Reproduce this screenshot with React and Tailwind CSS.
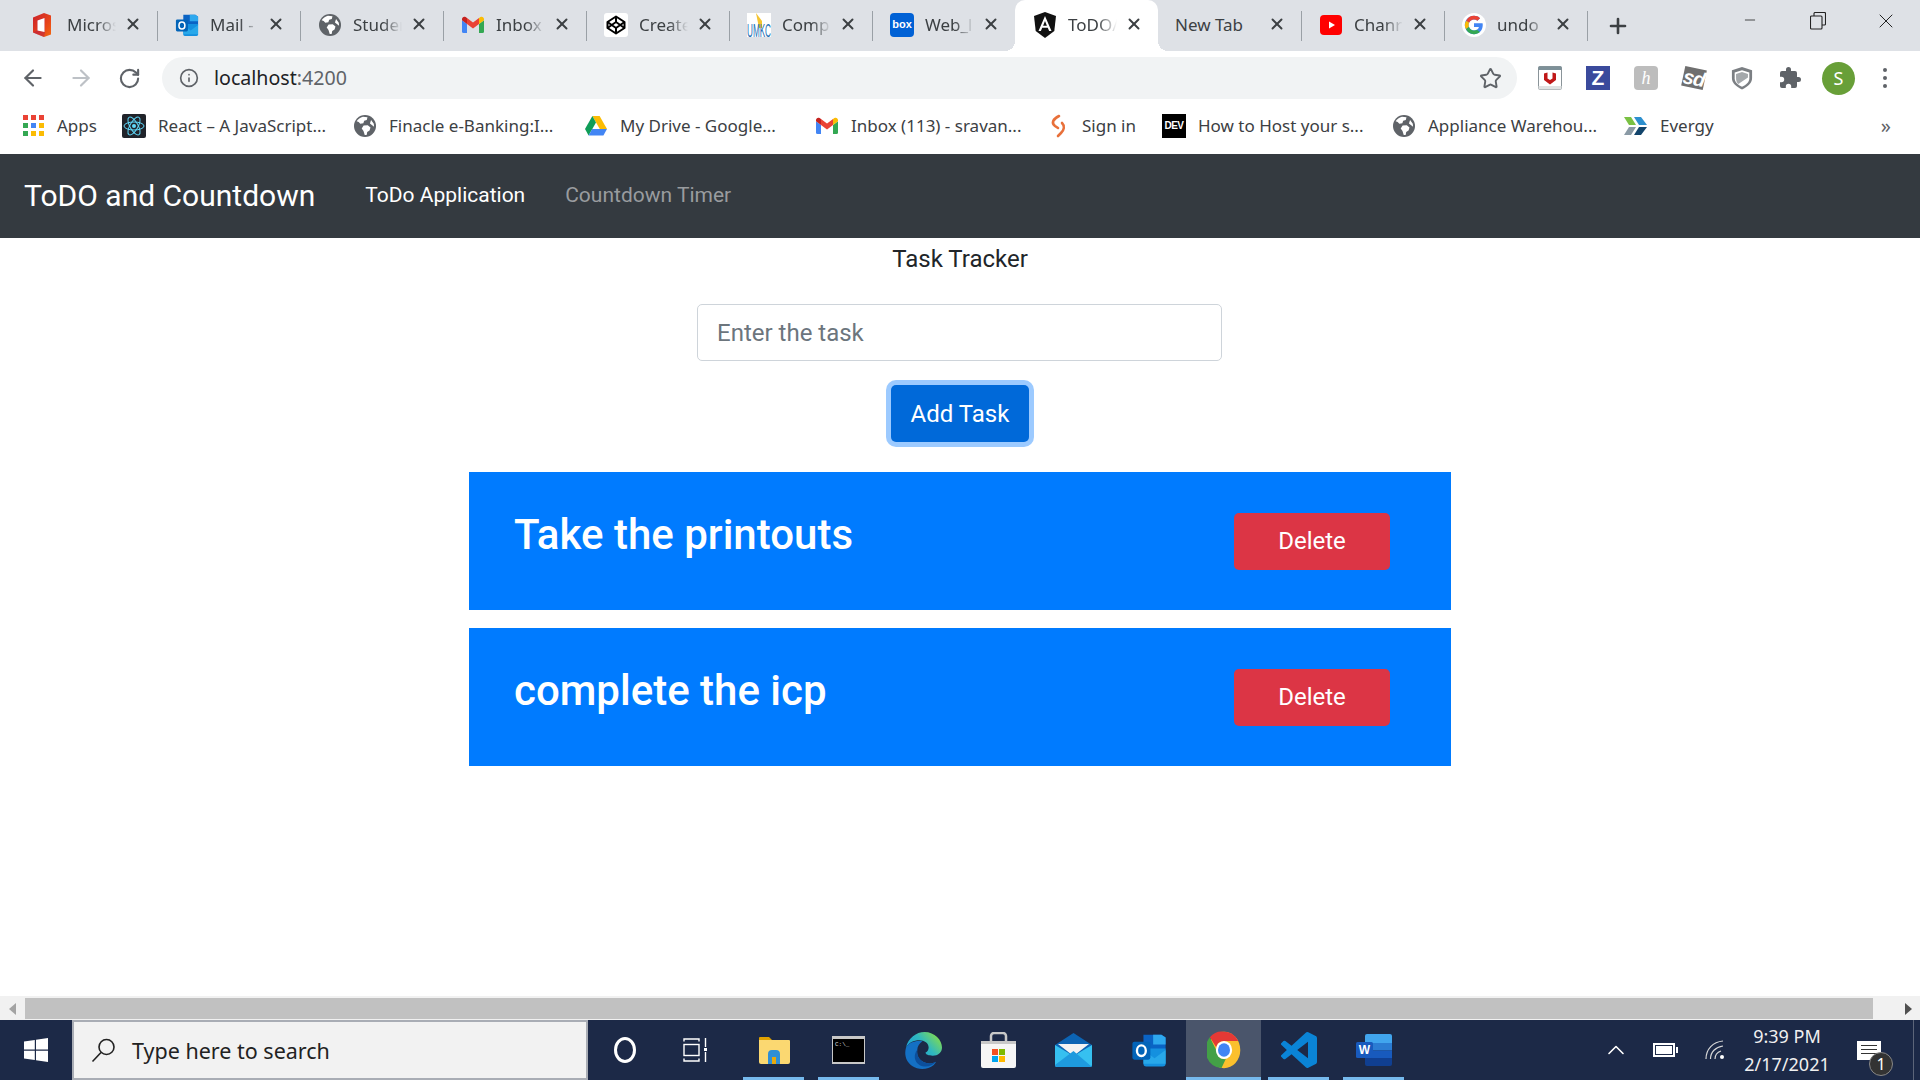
import { ArrowLeft, ArrowRight, RotateCw, Info, Star, X, Plus, Minus, ChevronUp } from 'lucide-react';

const Globe = ({ size = 22 }) => (
  <svg width={size} height={size} viewBox="0 0 16 16">
    <circle cx="8" cy="8" r="8" fill="#5f6368" />
    <path d="M6.500 1.200 9.800 1.600 9.300 3.600 7.400 4.200 6.800 6 4.600 6.400 3.400 5 1.900 4.600A7 7 0 0 1 6.500 1.200Z" fill="#fff" />
    <path d="M7 7.600 10 7.400 12 9 11.300 11.200 9.600 12.400 9.200 14.600 7.800 14.600 6.900 11.600 5.600 9.800Z" fill="#fff" />
    <path d="M12.400 3.600 14.400 6.400 14.600 8.600 13 7.200 11.600 6.200Z" fill="#fff" />
  </svg>
);

const Office = () => (
  <svg width="20" height="26" viewBox="0 0 20 26" className="ml-[-4px]">
    <defs>
      <linearGradient id="officeGrad" x1="0" y1="0" x2="1" y2="1">
        <stop offset="0" stopColor="#c8202c" />
        <stop offset=".6" stopColor="#e8441a" />
        <stop offset="1" stopColor="#f26a10" />
      </linearGradient>
    </defs>
    <path d="M1 5.500 12 1l7 2.500v19L12 25 1 20.500Z" fill="url(#officeGrad)" />
    <path d="M1 20.500 5 18.500V8l8-2.500V20.500L12 25Z" fill="#b01a50" opacity=".45" />
    <path d="M5.500 8.500 12.500 6V20L5.500 18.500Z" fill="#fff" />
  </svg>
);

const Outlook = ({ size = 26 }) => (
  <svg width={size} height={size} viewBox="0 0 26 26">
    <path d="M9 2h13l3 2v9H9Z" fill="#0a63c4" />
    <path d="M16 2h6l3 2v5h-9Z" fill="#2ea8ee" />
    <path d="M9 12h16v11a2 2 0 0 1-2 2H11a2 2 0 0 1-2-2Z" fill="#1490df" />
    <path d="M9 13l8 6 8-6v10H9Z" fill="#28a8ea" />
    <rect x="1" y="7" width="13" height="13" rx="1.500" fill="#0364b8" />
    <ellipse cx="7.500" cy="13.500" rx="3.200" ry="3.800" fill="none" stroke="#fff" strokeWidth="1.700" />
  </svg>
);

const Gmail = () => (
  <svg width="22" height="18" viewBox="0 0 22 18">
    <path d="M1.500 17H5V8l-5-3.800V15.500A1.500 1.500 0 0 0 1.500 17Z" fill="#4285f4" />
    <path d="M17 17h3.500a1.500 1.500 0 0 0 1.500-1.500V4.200L17 8Z" fill="#34a853" />
    <path d="M17 2v6l5-3.800V3c0-2-2.200-3-3.600-1.900Z" fill="#fbbc04" />
    <path d="M5 8V2l6 4.500L17 2v6l-6 4.500Z" fill="#ea4335" />
    <path d="M0 3v1.200L5 8V2L3.600 1.100C2.200 0 0 1 0 3Z" fill="#c5221f" />
  </svg>
);

const Codepen = () => (
  <span className="flex h-[24px] w-[24px] items-center justify-center rounded-[3px] bg-white">
    <svg width="20" height="20" viewBox="0 0 20 20" fill="none" stroke="#000" strokeWidth="2" strokeLinejoin="round">
      <path d="M10 1.500 18.500 7v6L10 18.500 1.500 13V7Z" />
      <path d="M10 1.500V7M10 13v5.500M1.500 7 10 13l8.500-6M1.500 13 10 7l8.500 6" />
    </svg>
  </span>
);

const Umkc = () => (
  <svg width="24" height="24" viewBox="0 0 24 24">
    <rect width="24" height="24" fill="#fff" />
    <path d="M9 0 15 8 15 15 12 15Z" fill="#f4c430" />
    <text x="0" y="24" fontSize="19" fontFamily="Liberation Sans, sans-serif" textLength="24" lengthAdjust="spacingAndGlyphs" fill="#1f6fb5">UMKC</text>
  </svg>
);

const BoxLogo = () => (
  <span className="flex h-[24px] w-[24px] items-center justify-center rounded-[4px] bg-[#0061d5] font-['Liberation_Sans',sans-serif] text-[11px] font-bold text-white">box</span>
);

const Angular = () => (
  <svg width="24" height="26" viewBox="0 0 24 26">
    <path d="M12 0 1 4l1.700 15L12 26l9.300-7L23 4Z" fill="#111" />
    <path d="M12 4 5.500 19h2.400l1.300-3.300h5.600l1.300 3.300h2.400Zm-1.900 9.700L12 9l1.900 4.700Z" fill="#fff" />
  </svg>
);

const YouTube = () => (
  <svg width="22" height="20" viewBox="0 0 22 20">
    <rect width="22" height="20" rx="4" fill="#f00" />
    <path d="M9 6.500 15 10l-6 3.500Z" fill="#fff" />
  </svg>
);

const GoogleG = () => (
  <span className="flex h-[24px] w-[24px] items-center justify-center rounded-full bg-white">
    <svg width="20" height="20" viewBox="0 0 48 48">
      <path d="M44.500 20H24v8.500h11.800C34.700 33.900 30.100 37 24 37c-7.200 0-13-5.800-13-13s5.800-13 13-13c3.100 0 5.900 1.100 8.100 2.900l6.400-6.400C34.600 4.100 29.600 2 24 2 11.800 2 2 11.800 2 24s9.800 22 22 22c11 0 21-8 21-22 0-1.300-.2-2.700-.5-4Z" fill="#4285f4" />
      <path d="M5.300 13.700 12.300 18.800C14.200 14.200 18.700 11 24 11c3.100 0 5.900 1.100 8.100 2.900l6.400-6.400C34.600 4.100 29.600 2 24 2 15.600 2 8.400 6.700 5.300 13.700Z" fill="#ea4335" />
      <path d="M24 46c5.400 0 10.300-1.800 14.100-5l-6.800-5.600C29.300 36.500 26.800 37 24 37c-5.700 0-10.600-3.700-12.300-8.900l-7 5.400C8 40.800 15.400 46 24 46Z" fill="#34a853" />
      <path d="M5.300 13.700C3.200 17 2 20.400 2 24s1 7 2.700 9.500l7-5.400c-.4-1.300-.7-2.700-.7-4.100s.5-3.800 1.300-5.200Z" fill="#fbbc05" />
    </svg>
  </span>
);

const AppsGrid = () => (
  <span className="grid w-[21px] grid-cols-3 gap-[3px]">
    {['bg-[#ea4335]', 'bg-[#ea4335]', 'bg-[#ea4335]', 'bg-[#34a853]', 'bg-[#4285f4]', 'bg-[#fbbc04]', 'bg-[#34a853]', 'bg-[#fbbc04]', 'bg-[#fbbc04]'].map((c, i) => (
      <span key={i} className={`h-[5px] w-[5px] ${c}`} />
    ))}
  </span>
);

const ReactLogo = () => (
  <svg width="24" height="24" viewBox="0 0 24 24">
    <rect width="24" height="24" rx="2" fill="#20232a" />
    <g fill="none" stroke="#61dafb" strokeWidth="1">
      <ellipse cx="12" cy="12" rx="10" ry="4" />
      <ellipse cx="12" cy="12" rx="10" ry="4" transform="rotate(60 12 12)" />
      <ellipse cx="12" cy="12" rx="10" ry="4" transform="rotate(120 12 12)" />
    </g>
    <circle cx="12" cy="12" r="2" fill="#61dafb" />
  </svg>
);

const Drive = () => (
  <svg width="22" height="20" viewBox="0 0 22 20">
    <path d="M7.400 0h7.200L22 13h-7.200Z" fill="#fbbc04" />
    <path d="M7.400 0 0 13l3.600 6.500L11 6.500Z" fill="#0f9d58" />
    <path d="M3.600 19.500h14.800L22 13H7.200Z" fill="#4285f4" />
  </svg>
);

const SignIn = () => (
  <svg width="18" height="24" viewBox="0 0 18 24" fill="none" stroke="#e8703a" strokeWidth="2.600" strokeLinecap="round">
    <path d="M10 2C4 5 2 9 6 12l3 2" />
    <path d="M13 9c3 3 2 7-1 10l-3 3" />
  </svg>
);

const Dev = () => (
  <span className="flex h-[24px] w-[24px] items-center justify-center bg-black font-['Liberation_Sans',sans-serif] text-[10px] font-bold tracking-[-0.5px] text-white">DEV</span>
);

const Evergy = () => (
  <svg width="24" height="20" viewBox="0 0 24 20">
    <path d="M0 1h7l5 8H5Z" fill="#7ac143" />
    <path d="M5 11h7l-5 8H0Z" fill="#8a9aa5" />
    <path d="M10 1h7l6 8h-8Z" fill="#2d8fce" />
    <path d="M15 11h8l-6 8h-7Z" fill="#12446b" />
  </svg>
);

const McAfee = () => (
  <svg width="24" height="24" viewBox="0 0 24 24">
    <rect x=".5" y=".5" width="23" height="23" rx="1.500" fill="#fff" stroke="#8a9499" />
    <rect x=".5" y=".5" width="23" height="3.500" fill="#7d9098" />
    <rect x=".5" y="20" width="23" height="3.500" fill="#dfe2e2" />
    <path d="M6 7.500 9.500 6.500V12.500L12 14l2.500-1.500V6.500L18 7.500V14l-6 4.500L6 14Z" fill="#c01818" />
  </svg>
);

const Zotero = () => (
  <span className="flex h-[24px] w-[24px] items-center justify-center bg-[#3a4a9c] font-['Liberation_Sans',sans-serif] text-[21px] font-bold text-white">Z</span>
);

const Honey = () => (
  <span className="flex h-[24px] w-[24px] items-center justify-center rounded-[4px] bg-[#bdbdbd] font-['Liberation_Serif',serif] text-[18px] italic text-white">h</span>
);

const SdLogo = () => (
  <span className="flex h-[20px] w-[22px] rotate-12 items-center justify-center bg-[#6f6f6f] font-['Liberation_Sans',sans-serif] text-[20px] font-bold italic leading-none tracking-[-1px] text-white">sd</span>
);

const ShieldExt = () => (
  <svg width="22" height="24" viewBox="0 0 24 26">
    <path d="M12 1 23 4.500V13c0 6-5 9.500-11 12.500C6 22.500 1 19 1 13V4.500Z" fill="#7b7f83" />
    <path d="M12 4.500 20 7v6.500c0 4-3.500 7-8 9-4.500-2-8-5-8-9V7Z" fill="#fff" />
    <path d="M12 6.500 18.500 8.500v4L8 19.500C6 18 5.500 15 5.500 13V8.500Z" fill="#a4a8ab" />
  </svg>
);

const Puzzle = () => (
  <svg width="24" height="24" viewBox="0 0 24 24" fill="#5f6368">
    <path d="M20.500 11H19V7a2 2 0 0 0-2-2h-4V3.500a2.500 2.500 0 0 0-5 0V5H4a2 2 0 0 0-2 2v3.800h1.500a2.700 2.700 0 0 1 0 5.400H2V20a2 2 0 0 0 2 2h3.800v-1.500a2.700 2.700 0 0 1 5.400 0V22H17a2 2 0 0 0 2-2v-4h1.500a2.500 2.500 0 0 0 0-5Z" />
  </svg>
);

const WinLogo = () => (
  <svg width="24" height="24" viewBox="0 0 24 24" fill="#fff">
    <path d="M0 3.400 10.800 2v9.500H0ZM12 1.800 24 0v11.500H12ZM0 12.700h10.800v9.400L0 20.600ZM12 12.700h12V24l-12-1.700Z" />
  </svg>
);

const SearchGlass = () => (
  <svg width="26" height="26" viewBox="0 0 26 26" fill="none" stroke="#222" strokeWidth="1.600">
    <circle cx="15.500" cy="10" r="7.500" />
    <path d="M10 15.500 1.500 24.500" />
  </svg>
);

const TaskView = () => (
  <svg width="26" height="26" viewBox="0 0 26 26" fill="none" stroke="#fff" strokeWidth="1.400" className="ml-[-5px]">
    <path d="M1 4.500V2h15v2.500M1 21.500V24h15v-2.500" />
    <rect x="1" y="7.500" width="15" height="11" />
    <path d="M22.500 1v9M22.500 15v10" />
    <rect x="21" y="11" width="3" height="3" fill="#fff" stroke="none" />
  </svg>
);

const Explorer = () => (
  <svg width="32" height="28" viewBox="0 0 32 28">
    <path d="M1 2a1 1 0 0 1 1-1h9l3 3h-13Z" fill="#e0a100" />
    <path d="M1 4h30a1 1 0 0 1 1 1v21a2 2 0 0 1-2 2H3a2 2 0 0 1-2-2Z" fill="#fbd871" />
    <path d="M10 28v-10a4 4 0 0 1 4-4h4a4 4 0 0 1 4 4v10h-4v-7h-4v7Z" fill="#2f8fd6" />
    <rect x="14" y="21" width="4" height="7" fill="#e8a90c" />
  </svg>
);

const Cmd = () => (
  <svg width="33" height="28" viewBox="0 0 33 28">
    <rect width="33" height="28" fill="#c8c8c8" />
    <rect x="1" y="3" width="31" height="23" fill="#000" />
    <text x="3" y="10" fontSize="6" fontFamily="Liberation Mono, monospace" fill="#ddd">C:\_</text>
  </svg>
);

const Edge = () => (
  <svg width="37" height="37" viewBox="0 0 36 36">
    <defs>
      <linearGradient id="edgeTop" x1="0" y1="1" x2="1" y2=".4">
        <stop offset="0" stopColor="#1798dc" />
        <stop offset=".6" stopColor="#2fb8c0" />
        <stop offset="1" stopColor="#7ad85a" />
      </linearGradient>
    </defs>
    <path d="M1 15C3 6 11 0 19 0c10 0 17 8 17 15 0 5-4 8-9 8-4 0-7-1-7-3 2-1 3-3 3-5 0-4-4-7-9-7C8 8 4 10 1 15Z" fill="url(#edgeTop)" />
    <path d="M1 15C-1 22 1 29 7 33c6 4 15 4 21-1 1-1 2-2 2-3-3 2-7 2-10 1-6-2-9-7-8-13 0-3 2-6 5-8-7-1-13 1-16 6Z" fill="#1470c4" />
    <path d="M12 17c-1 6 2 11 8 13 3 1 7 1 10-1-4 5-11 6-16 3-5-3-6-10-2-15Z" fill="#0c4f9c" />
  </svg>
);

const Store = () => (
  <svg width="35" height="36" viewBox="0 0 35 36">
    <path d="M10 9V4a3 3 0 0 1 3-3h9a3 3 0 0 1 3 3v5" fill="none" stroke="#c8c8c8" strokeWidth="2.500" />
    <path d="M0 9h35v25a2 2 0 0 1-2 2H2a2 2 0 0 1-2-2Z" fill="#f6f6f6" />
    <rect y="9" width="35" height="3" fill="#c8c8c8" />
    <rect x="11" y="17" width="6" height="6" fill="#f25022" />
    <rect x="18" y="17" width="6" height="6" fill="#7fba00" />
    <rect x="11" y="24" width="6" height="6" fill="#00a4ef" />
    <rect x="18" y="24" width="6" height="6" fill="#ffb900" />
  </svg>
);

const Mail = () => (
  <svg width="37" height="34" viewBox="0 0 37 34">
    <path d="M0 12 18.500 0 37 12v20a2 2 0 0 1-2 2H2a2 2 0 0 1-2-2Z" fill="#0c64b4" />
    <path d="M3 11h31L18.500 23Z" fill="#f3f3f3" />
    <path d="M0 12 18.500 23 37 12v20a2 2 0 0 1-2 2H2a2 2 0 0 1-2-2Z" fill="#36c0f0" />
    <path d="M0 32 18.500 18 37 34H2a2 2 0 0 1-2-2Z" fill="#1e9ade" />
  </svg>
);

const ChromeLogo = () => (
  <svg width="34" height="38" viewBox="0 0 48 48" preserveAspectRatio="none">
    <circle cx="24" cy="24" r="23" fill="#fbc02d" />
    <path d="M24 1a23 23 0 0 1 20 11.500H24a11.500 11.500 0 0 0-11 8L4 8A23 23 0 0 1 24 1Z" fill="#e53935" />
    <path d="M4 8l9.500 17a11.500 11.500 0 0 0 13 10.500L20.500 46.800A23 23 0 0 1 4 8Z" fill="#43a047" />
    <circle cx="24" cy="24" r="11.500" fill="#fff" />
    <circle cx="24" cy="24" r="8.500" fill="#4285f4" />
  </svg>
);

const VSCode = () => (
  <svg width="36" height="36" viewBox="0 0 24 24">
    <path d="M23.150 2.590 18.200.2a1.500 1.500 0 0 0-1.700.29L7.040 9.130 2.920 6a1 1 0 0 0-1.280.06L.32 7.260a1 1 0 0 0 0 1.480L3.900 12 .32 15.260a1 1 0 0 0 0 1.480l1.320 1.200a1 1 0 0 0 1.280.06l4.120-3.130 9.460 8.640a1.500 1.500 0 0 0 1.700.29l4.950-2.390A1.500 1.500 0 0 0 24 20.060V3.940a1.500 1.500 0 0 0-.85-1.350ZM18 17.450 10.820 12 18 6.550Z" fill="#0a84d6" />
  </svg>
);

const Word = () => (
  <svg width="36" height="32" viewBox="0 0 36 32">
    <path d="M9 2a2 2 0 0 1 2-2h23a2 2 0 0 1 2 2v7H9Z" fill="#41a5ee" />
    <rect x="9" y="9" width="27" height="7.500" fill="#2b7cd3" />
    <rect x="9" y="16.500" width="27" height="7.500" fill="#185abd" />
    <path d="M9 24h27v6a2 2 0 0 1-2 2H11a2 2 0 0 1-2-2Z" fill="#103f91" />
    <rect y="8" width="17" height="16" rx="1.500" fill="#185abd" />
    <text x="8.500" y="20" textAnchor="middle" fontSize="12" fontWeight="700" fontFamily="Liberation Sans, sans-serif" fill="#fff">W</text>
  </svg>
);

const tabs = [
  { title: 'Micros', icon: <Office /> },
  { title: 'Mail -', icon: <Outlook size={24} /> },
  { title: 'Studer', icon: <Globe /> },
  { title: 'Inbox', icon: <Gmail /> },
  { title: 'Create', icon: <Codepen /> },
  { title: 'Comp', icon: <Umkc /> },
  { title: 'Web_l', icon: <BoxLogo /> },
  { title: 'ToDO/', icon: <Angular />, active: true },
  { title: 'New Tab' },
  { title: 'Chanr', icon: <YouTube /> },
  { title: 'undo', icon: <GoogleG /> },
];

const bookmarks = [
  { label: 'Apps', icon: <AppsGrid />, w: 'w-[101px]' },
  { label: 'React – A JavaScript...', icon: <ReactLogo />, w: 'w-[231px]' },
  { label: 'Finacle e-Banking:I...', icon: <Globe />, w: 'w-[231px]' },
  { label: 'My Drive - Google...', icon: <Drive />, w: 'w-[231px]' },
  { label: 'Inbox (113) - sravan...', icon: <Gmail />, w: 'w-[231px]' },
  { label: 'Sign in', icon: <SignIn />, w: 'w-[116px]' },
  { label: 'How to Host your s...', icon: <Dev />, w: 'w-[230px]' },
  { label: 'Appliance Warehou...', icon: <Globe />, w: 'w-[232px]' },
  { label: 'Evergy', icon: <Evergy />, w: 'w-[100px]' },
];

const extensions = [<McAfee />, <Zotero />, <Honey />, <SdLogo />, <ShieldExt />, <Puzzle />];

const taskbarApps = [
  { icon: <span className="h-[26px] w-[22px] rounded-[50%] border-[3px] border-white" />, w: 'w-[73px]' },
  { icon: <TaskView /> },
  { icon: <Explorer />, open: true },
  { icon: <Cmd />, open: true },
  { icon: <Edge /> },
  { icon: <Store /> },
  { icon: <Mail /> },
  { icon: <Outlook size={36} /> },
  { icon: <ChromeLogo />, open: true, active: true },
  { icon: <VSCode />, open: true },
  { icon: <Word />, open: true },
];

const tasks = ['Take the printouts', 'complete the icp'];

function Tab({ tab, hideSep }) {
  return (
    <div className={`relative flex h-[51px] w-[143px] shrink-0 items-center pb-[2px] ${tab.active ? 'rounded-t-[10px] bg-white' : ''}`}>
      {tab.icon && <span className="ml-[17px] flex w-[26px] shrink-0 justify-center">{tab.icon}</span>}
      <span className={`${tab.icon ? 'ml-[10px] w-[49px] [mask-image:linear-gradient(to_right,black_60%,transparent)]' : 'ml-[17px] w-[90px]'} overflow-hidden whitespace-nowrap text-[17px] text-[#3c4043]`}>
        {tab.title}
      </span>
      <X size={18} strokeWidth={2.6} className="absolute left-[110px] top-[15px] text-[#3c4043]" />
      {!hideSep && <span className="absolute right-[-1px] top-[11px] h-[30px] w-[1px] bg-[#9aa0a6]" />}
      {tab.active && (
        <>
          <span className="absolute bottom-0 left-[-10px] h-[10px] w-[10px] bg-[radial-gradient(circle_at_0_0,#dee1e6_10px,#fff_10px)]" />
          <span className="absolute bottom-0 right-[-10px] h-[10px] w-[10px] bg-[radial-gradient(circle_at_100%_0,#dee1e6_10px,#fff_10px)]" />
        </>
      )}
    </div>
  );
}

function ChromeBar() {
  return (
    <div className="font-['Noto_Sans',sans-serif]">
      <div className="flex h-[51px] items-center bg-[#dee1e6] pl-[14px]">
        {tabs.map((tab, i) => (
          <Tab key={tab.title} tab={tab} hideSep={tab.active || tabs[i + 1]?.active} />
        ))}
        <Plus size={24} strokeWidth={2.6} className="ml-[19px] text-[#3c4043]" />
        <div className="ml-auto flex h-full items-start text-[#222]">
          <span className="flex h-[40px] w-[68px] items-center justify-center"><Minus size={16} strokeWidth={1.2} /></span>
          <span className="flex h-[42px] w-[68px] items-center justify-center">
            <svg width="16" height="18" viewBox="0 0 16 18" fill="none" stroke="#222" strokeWidth="1.100">
              <rect x=".5" y="4" width="11.500" height="13" rx="1" />
              <path d="M4 4V1.500A1 1 0 0 1 5 .5h9.500a1 1 0 0 1 1 1V12a1 1 0 0 1-1 1H12" />
            </svg>
          </span>
          <span className="flex h-[42px] w-[68px] items-center justify-center"><X size={24} strokeWidth={1} /></span>
        </div>
      </div>

      <div className="flex h-[52px] items-center bg-white pt-[2px]">
        <ArrowLeft size={26} strokeWidth={2} className="ml-[20px] text-[#5f6368]" />
        <ArrowRight size={26} strokeWidth={2} className="ml-[22px] text-[#bdc1c6]" />
        <RotateCw size={23} strokeWidth={2.2} className="ml-[24px] text-[#5f6368]" />
        <div className="ml-[21px] flex h-[42px] w-[1355px] items-center rounded-full bg-[#f1f3f4] pl-[17px] pr-[15px]">
          <Info size={20} strokeWidth={2} className="text-[#5f6368]" />
          <span className="ml-[15px] text-[19.600px] text-[#202124]">
            localhost<span className="text-[#5f6368]">:4200</span>
          </span>
          <Star size={23} strokeWidth={2} className="ml-auto text-[#5f6368]" />
        </div>
        <div className="ml-[9px] flex items-center">
          {extensions.map((ext, i) => (
            <span key={i} className="flex w-[48px] justify-center">{ext}</span>
          ))}
        </div>
        <span className="ml-[8px] flex h-[33px] w-[33px] items-center justify-center rounded-full bg-[#689f38] text-[18px] text-white">S</span>
        <span className="ml-[28px] flex flex-col gap-[4px]">
          <span className="h-[4px] w-[4px] rounded-full bg-[#5f6368]" />
          <span className="h-[4px] w-[4px] rounded-full bg-[#5f6368]" />
          <span className="h-[4px] w-[4px] rounded-full bg-[#5f6368]" />
        </span>
      </div>

      <div className="flex h-[51px] items-center bg-white pb-[6px] pl-[21px]">
        {bookmarks.map((b) => (
          <div key={b.label} className={`flex shrink-0 items-center gap-[12px] ${b.w}`}>
            <span className="flex w-[24px] shrink-0 justify-center">{b.icon}</span>
            <span className="whitespace-nowrap text-[17px] text-[#3c4043]">{b.label}</span>
          </div>
        ))}
        <span className="ml-auto mr-[29px] text-[20px] leading-none text-[#5f6368]">»</span>
      </div>
    </div>
  );
}

function Navbar() {
  return (
    <nav className="flex h-[84px] items-center bg-[#343a40] pl-[24px]">
      <span className="pb-[2px] text-[30px] text-white">ToDO and Countdown</span>
      <span className="ml-[50px] text-[21px] text-white">ToDo Application</span>
      <span className="ml-[40px] text-[21px] text-[#999c9f]">Countdown Timer</span>
    </nav>
  );
}

function TaskCard({ title }) {
  return (
    <div className="flex h-[138px] w-[982px] justify-between bg-[#007bff] pl-[45px] pr-[61px] pt-[41px]">
      <h2 className="mt-[-3px] text-[42px] font-medium leading-[50px] text-white">{title}</h2>
      <button className="h-[57px] w-[156px] rounded-[5px] bg-[#dc3545] pb-[2px] text-[24px] text-white">Delete</button>
    </div>
  );
}

function Main() {
  return (
    <main className="flex flex-1 flex-col items-center bg-white">
      <div className="mt-[3px] h-[36px] text-[24px] leading-[36px] text-[#212529]">Task Tracker</div>
      <input
        placeholder="Enter the task"
        className="ml-[-1px] mt-[27px] h-[57px] w-[525px] rounded-[5px] border border-[#ced4da] bg-white px-[19px] text-[24px] text-[#495057] outline-none placeholder:text-[#6c757d]"
      />
      <button className="mt-[24px] h-[57px] w-[138px] rounded-[5px] bg-[#0069d9] text-[24px] text-white shadow-[0_0_0_5px_#9ccaff]">Add Task</button>
      <div className="mt-[30px] flex flex-col gap-[18px]">
        {tasks.map((t) => <TaskCard key={t} title={t} />)}
      </div>
    </main>
  );
}

function Scrollbar() {
  return (
    <div className="flex h-[24px] items-end bg-[#f1f1f1] pb-[1px]">
      <span className="flex h-[21px] w-[25px] items-center justify-center">
        <span className="h-0 w-0 border-y-[6px] border-r-[7px] border-y-transparent border-r-[#a3a3a3]" />
      </span>
      <div className="h-[21px] w-[1848px] bg-[#c1c1c1]" />
      <span className="flex h-[21px] flex-1 items-center justify-end pr-[8px]">
        <span className="h-0 w-0 border-y-[6px] border-l-[7px] border-y-transparent border-l-[#505050]" />
      </span>
    </div>
  );
}

function Taskbar() {
  return (
    <div className="flex h-[60px] items-stretch bg-[#1c2947] font-['Noto_Sans',sans-serif]">
      <div className="flex w-[72px] items-center justify-center"><WinLogo /></div>
      <div className="flex w-[516px] items-center border-2 border-[#a9adb5] bg-[#f2f2f2] pl-[17px]">
        <SearchGlass />
        <span className="ml-[15px] pt-[3px] text-[21.500px] text-[#222]">Type here to search</span>
      </div>
      {taskbarApps.map((app, i) => (
        <div key={i} className={`relative flex items-center justify-center ${app.w || 'w-[75px]'} ${app.active ? 'bg-[#4a556b]' : ''}`}>
          {app.icon}
          {app.open && <span className={`absolute bottom-0 h-[3px] bg-[#76b9ed] ${app.active ? 'left-0 right-0' : 'left-[7px] right-[7px]'}`} />}
        </div>
      ))}
      <div className="relative flex flex-1 items-center text-white">
        <ChevronUp size={28} strokeWidth={1.4} className="ml-[191px]" />
        <span className="relative ml-[23px] h-[14px] w-[22px] border-2 border-white bg-white bg-clip-content p-[1px]">
          <span className="absolute right-[-5px] top-[2px] h-[6px] w-[2px] bg-white" />
        </span>
        <svg width="20" height="20" viewBox="0 0 20 20" fill="none" stroke="#d8d8d8" strokeWidth="1.200" className="ml-[30px]">
          <path d="M1 19C1 9 8 2 18 1M5.500 19c0-7 5-12 12.500-13M10 19c0-4 3-7 6-8" />
          <circle cx="17" cy="17" r="2" fill="#fff" stroke="none" />
        </svg>
        <div className="ml-[17px] flex w-[90px] flex-col items-center gap-[3px] text-[18px] leading-[25px] text-[#f0f0f0]">
          <span>9:39 PM</span>
          <span>2/17/2021</span>
        </div>
        <div className="relative ml-[25px] h-[19px] w-[24px] bg-white">
          <span className="mx-[4px] mt-[4px] block h-[1px] bg-[#333]" />
          <span className="mx-[4px] mt-[3px] block h-[1px] bg-[#333]" />
          <span className="mx-[4px] mt-[3px] block h-[1px] bg-[#333]" />
          <span className="absolute left-[12px] top-[11px] flex h-[24px] w-[24px] items-center justify-center rounded-full border border-[#888] bg-[#333] text-[16px] text-white">1</span>
        </div>
        <span className="absolute bottom-0 right-[6px] top-0 w-[1px] bg-[#5c6579]" />
      </div>
    </div>
  );
}

export default function App() {
  return (
    <div className="flex h-[1080px] w-[1920px] flex-col overflow-hidden font-['Roboto',sans-serif]">
      <ChromeBar />
      <Navbar />
      <Main />
      <Scrollbar />
      <Taskbar />
    </div>
  );
}
